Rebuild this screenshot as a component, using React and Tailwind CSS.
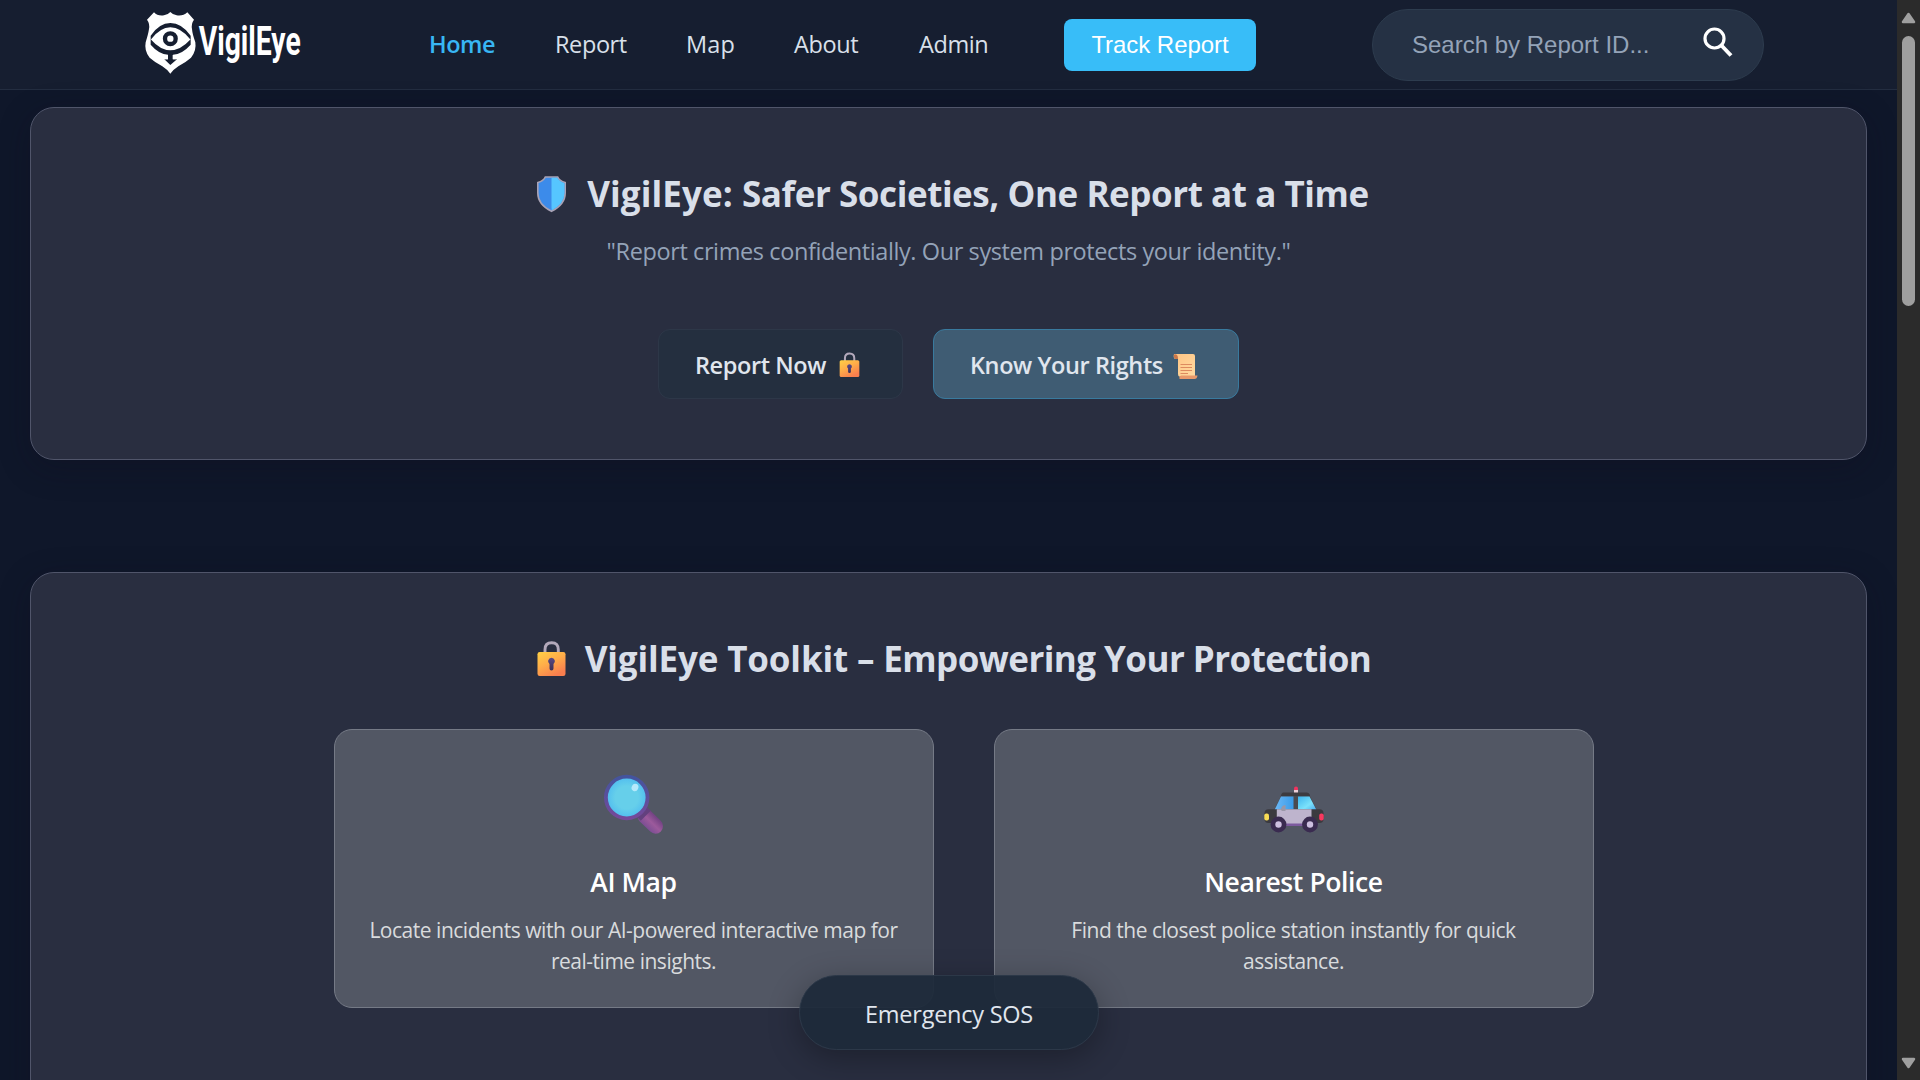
import React from "react";

function Logo() {
  return (
    <svg width="170" height="75" viewBox="0 0 510 225" className="overflow-visible" aria-label="VigilEye">
      <path
        fill="#fff"
        d="M42 22Q53 34 72 31Q84 29 91 21Q98 29 110 31Q129 34 142 22L162 44Q153 56 156 72Q157 86 166 112Q170 138 153 158Q137 172 115 184Q101 193 91 206Q81 193 67 184Q45 172 29 158Q12 138 17 112Q25 86 27 72Q30 56 21 44Z"
      />
      <path fill="#161e30" d="M32 104V92Q58 54 91 54Q125 54 152 92V104Q122 67 91 67Q61 67 32 104Z" />
      <path fill="#161e30" d="M32 103Q61 136 91 136Q122 136 152 103V119Q126 148 99 149V163H111L91 180L73 163H84V149Q57 148 32 119Z" />
      <path fill="#fff" d="M78 150H84V163H75ZM104 150H98V163H108Z" />
      <circle cx="91" cy="101" r="16" fill="none" stroke="#161e30" strokeWidth="13" />
      <text
        x="176"
        y="150"
        fill="#fff"
        fontFamily="Roboto, sans-serif"
        fontWeight="700"
        fontSize="124"
        textLength="306"
        lengthAdjust="spacingAndGlyphs"
      >
        VigilEye
      </text>
    </svg>
  );
}

function Shield() {
  return (
    <svg width="47" height="40" viewBox="0 0 47 40">
      <defs>
        <clipPath id="shieldHalf">
          <rect x="23.5" y="0" width="24" height="40" />
        </clipPath>
      </defs>
      <path
        fill="#3c8bea"
        stroke="#a8a2b5"
        strokeWidth="1.6"
        d="M17.3 3H29.7Q31.5 7 37.2 8.5V19Q37.2 30.5 23.5 37.3Q9.8 30.5 9.8 19V8.5Q15.5 7 17.3 3Z"
      />
      <path
        clipPath="url(#shieldHalf)"
        fill="#56c6ff"
        d="M17.3 3.8H29.3Q31.2 7.8 36.4 9.2V19Q36.4 29.8 23.5 36.4Z"
      />
    </svg>
  );
}

function Lock({ className }) {
  return (
    <svg className={className} viewBox="0 0 47 40">
      <defs>
        <linearGradient id="lockBody" x1="0" y1="0" x2=".6" y2="1">
          <stop offset="0" stopColor="#ffd045" />
          <stop offset=".5" stopColor="#ffad49" />
          <stop offset="1" stopColor="#f97e4e" />
        </linearGradient>
        <linearGradient id="lockHole" x1="0" y1="0" x2="0" y2="1">
          <stop offset="0" stopColor="#5b4a86" />
          <stop offset="1" stopColor="#3c2f55" />
        </linearGradient>
      </defs>
      <path d="M17 17V10.5Q17 3.7 23.7 3.7T30.3 10.5V17" fill="none" stroke="#b3a9bb" strokeWidth="2.9" />
      <rect x="9.5" y="13" width="28" height="24" rx="2.2" fill="url(#lockBody)" />
      <path d="M23.5 18.7a3.5 3.5 0 0 1 2 6.3v4.5a2 2 0 0 1-4 0V25a3.5 3.5 0 0 1 2-6.3Z" fill="url(#lockHole)" />
    </svg>
  );
}

function Scroll() {
  return (
    <svg width="33" height="30" viewBox="0 0 33 30">
      <defs>
        <linearGradient id="paper" x1="0" y1="0" x2="1" y2="1">
          <stop offset="0" stopColor="#ffc483" />
          <stop offset="1" stopColor="#ffd9a0" />
        </linearGradient>
      </defs>
      <path d="M5 3H24Q26 3 26 5V25H13Q9 27 9 23V8H6Q4 7 5 3Z" fill="url(#paper)" />
      <path d="M5 3.5Q9 2.5 9 8H6.5Q4.3 7 5 3.5Z" fill="#c9774a" />
      <path d="M12 24.5H28.5Q28 28 25.5 28H11Q9 27 12 24.5Z" fill="#e8996b" />
      <path d="M11.5 13.5H23M11.5 16.5H23M11.5 19.5H23M11.5 22.5H19" stroke="#dd8a5f" strokeWidth="1.2" />
    </svg>
  );
}

function Magnifier() {
  return (
    <svg width="70" height="70" viewBox="0 0 70 70" className="mx-auto block">
      <defs>
        <linearGradient id="rim" x1="0" y1="0" x2="0" y2="1">
          <stop offset="0" stopColor="#44549d" />
          <stop offset="1" stopColor="#75499a" />
        </linearGradient>
        <radialGradient id="glass">
          <stop offset=".55" stopColor="#66cfea" />
          <stop offset="1" stopColor="#4fbcf0" />
        </radialGradient>
        <linearGradient id="grip" x1="0" y1="1" x2="1" y2="0">
          <stop offset="0" stopColor="#7d4e94" />
          <stop offset=".5" stopColor="#9c5a9c" />
          <stop offset="1" stopColor="#744284" />
        </linearGradient>
      </defs>
      <path d="M46 46L56.5 56.2" stroke="url(#grip)" strokeWidth="15" strokeLinecap="round" />
      <path d="M40 49L50 39" stroke="#63407e" strokeWidth="5" />
      <circle cx="27.7" cy="27.5" r="20.8" fill="url(#glass)" stroke="url(#rim)" strokeWidth="3.8" />
      <ellipse cx="36" cy="17.5" rx="3.3" ry="3.8" transform="rotate(25 36 17.5)" fill="#b5e9fb" />
    </svg>
  );
}

function PoliceCar() {
  return (
    <svg width="70" height="70" viewBox="0 0 70 70" className="mx-auto block">
      <defs>
        <linearGradient id="windowL" x1="0" y1="0" x2="1" y2="0">
          <stop offset="0" stopColor="#6cb9f7" />
          <stop offset="1" stopColor="#3a9be8" />
        </linearGradient>
        <linearGradient id="windowR" x1="0" y1="0" x2="1" y2="1">
          <stop offset="0" stopColor="#3fb4ee" />
          <stop offset=".6" stopColor="#7be2fb" />
          <stop offset="1" stopColor="#4aa9ee" />
        </linearGradient>
      </defs>
      <path d="M35 21V18.5a2 2 0 0 1 4 0V21Z" fill="#f0345f" />
      <rect x="35" y="20" width="4" height="3" fill="#eccfd8" />
      <path d="M24 22.5H48Q50 22.5 51 25V28H21.5L22 25Q23 22.5 24 22.5Z" fill="#3c3b40" />
      <path d="M22 26H51L58 40H15Z" fill="#4a4a4f" />
      <path d="M22 26.5H34.5V40H15.5Z" fill="url(#windowL)" />
      <path d="M39 26.5H50.5L57.5 40H39Z" fill="url(#windowR)" />
      <rect x="5.5" y="39.3" width="59" height="13.7" rx="4" fill="#3b3a3f" />
      <path d="M17.8 39.3H52.5V55H17.8Z" fill="#beb4cd" />
      <path d="M24 53.5H48V56H24Z" fill="#7c5a9e" />
      <rect x="5.3" y="43.5" width="4.7" height="7" rx="2" fill="#f8dc55" />
      <rect x="60.2" y="43.5" width="4.5" height="7" rx="2" fill="#f8385f" />
      <path d="M22 40Q22 35.5 26.5 35V41H23Z" fill="#9a97a8" />
      <circle cx="19.5" cy="54.5" r="7.9" fill="#3a2b50" />
      <circle cx="19.5" cy="54.5" r="3.2" fill="#cdbfe0" />
      <circle cx="51" cy="54.5" r="7.9" fill="#3a2b50" />
      <circle cx="51" cy="54.5" r="3.2" fill="#cdbfe0" />
    </svg>
  );
}

function Header() {
  return (
    <header className="flex h-[90px] items-center border-b border-[#232d40] bg-[#161e30] pl-[140px] text-2xl text-[#d9e0ea]">
      <div className="mb-[5px] w-[289px]">
        <Logo />
      </div>
      <nav className="mb-px grid grid-cols-[126px_131px_108px_125px_145px] text-[23.5px] leading-8 tracking-[-0.4px]">
        <a className="font-semibold tracking-[-0.5px] text-[#38b6f4]">Home</a>
        <a>Report</a>
        <a className="tracking-[0.2px]">Map</a>
        <a>About</a>
        <a>Admin</a>
      </nav>
      <button className="mt-px h-[52px] w-[192px] rounded-lg bg-[#38bdf8] font-['Liberation_Sans',sans-serif] tracking-[-0.05px] text-white">
        Track Report
      </button>
      <div className="mt-px ml-[116px] flex h-[72px] w-[392px] items-center rounded-full border border-[#2d3c4e] bg-[#253144] pr-[30px] pl-[39px] font-['Liberation_Sans',sans-serif] text-[#94a3b8]">
        <span className="flex-1">Search by Report ID...</span>
        <svg width="30" height="30" viewBox="0 0 30 30" className="mb-[7px]" fill="none" stroke="#fff">
          <circle cx="11.5" cy="11.5" r="9.5" strokeWidth="3.2" />
          <path d="M18 18L28 28.5" strokeWidth="3.9" />
        </svg>
      </div>
    </header>
  );
}

function Panel({ className, children }) {
  return (
    <section
      className={
        "mx-[30px] rounded-3xl border border-[#50556a] bg-[#292e40] pt-[62px] shadow-[0_8px_32px_rgba(16,12,30,0.3)] " + className
      }
    >
      {children}
    </section>
  );
}

function ToolCard({ icon, title, text }) {
  return (
    <article className="h-[279px] w-[600px] rounded-[18px] border border-[#757a86] bg-[#525764] px-[30px] pt-10 text-center">
      {icon}
      <h3 className="mt-6 text-[26.5px] leading-9 font-semibold tracking-[-0.4px] text-white">{title}</h3>
      <p className="mt-[15px] text-[21px] leading-[31px] tracking-[-0.48px] text-[#d9dbdd]">{text}</p>
    </article>
  );
}

function Scrollbar() {
  return (
    <aside className="flex h-full w-[23px] flex-col items-center bg-[#2b2b2b] pt-3 pb-[11px]">
      <svg width="15" height="12" viewBox="0 0 15 12">
        <path d="M7.5 2L13 10H2Z" fill="#9f9f9f" stroke="#9f9f9f" strokeWidth="2.5" strokeLinejoin="round" />
      </svg>
      <div className="mt-3 h-[270px] w-[13px] rounded-full bg-[#9f9f9f]" />
      <svg width="15" height="12" viewBox="0 0 15 12" className="mt-auto">
        <path d="M7.5 10L13 2H2Z" fill="#9f9f9f" stroke="#9f9f9f" strokeWidth="2.5" strokeLinejoin="round" />
      </svg>
    </aside>
  );
}

export default function App() {
  return (
    <div className="flex h-screen w-full overflow-hidden bg-[#0f172a] font-['Open_Sans','Noto_Sans',sans-serif]">
      <main className="relative h-full flex-1 overflow-hidden">
        <Header />
        <Panel className="mt-[17px] h-[353px]">
          <h1 className="flex items-center justify-center gap-3 text-[35px] leading-[48px] font-bold tracking-[-0.44px] text-[#d9dfe9]">
            <Shield />
            <span className="whitespace-nowrap">
              <span className="tracking-[0.1px]">VigilEye: </span>Safer Societies, One Report at a Time
            </span>
          </h1>
          <p className="mt-[17px] text-center text-[23.5px] leading-8 tracking-[-0.4px] text-[#94a3b8]">
            "Report crimes confidentially. Our system protects your identity."
          </p>
          <div className="mt-[62px] flex justify-center gap-[30px] text-[23.5px] font-semibold tracking-[-0.4px] text-[#e0e6ee]">
            <button className="flex h-[70px] w-[245px] items-center justify-between rounded-xl border border-[#2d3748] bg-[#242f3f] px-9 pt-[3px] whitespace-nowrap">
              Report Now
              <Lock className="w-[33px]" />
            </button>
            <button className="flex h-[70px] w-[306px] items-center justify-between rounded-xl border border-[#397a9e] bg-[#3f5c73] px-9 pt-[3px] whitespace-nowrap">
              Know Your Rights
              <Scroll />
            </button>
          </div>
        </Panel>
        <Panel className="mt-28 h-[700px]">
          <h2 className="flex items-center justify-center gap-[10px] pl-[2px] text-[35px] leading-[48px] font-bold tracking-[-0.55px] text-[#d9dfe9]">
            <Lock className="w-[47px]" />
            <span className="whitespace-nowrap">
              <span className="tracking-[-0.15px]">VigilEye Toolkit – </span>Empowering Your Protection
            </span>
          </h2>
          <div className="mt-[46px] flex justify-center gap-[60px] pl-[30px]">
            <ToolCard
              icon={<Magnifier />}
              title="AI Map"
              text="Locate incidents with our AI-powered interactive map for real-time insights."
            />
            <ToolCard
              icon={<PoliceCar />}
              title="Nearest Police"
              text="Find the closest police station instantly for quick assistance."
            />
          </div>
        </Panel>
        <button className="absolute bottom-[30px] left-[799px] h-[75px] w-[300px] rounded-full border border-[#2c3848] bg-[#1e2a3a]/95 pt-[4px] text-[23.5px] tracking-[-0.25px] text-[#e0e6ee] shadow-[0_8px_32px_rgba(0,0,0,0.3)]">
          Emergency SOS
        </button>
      </main>
      <Scrollbar />
    </div>
  );
}
